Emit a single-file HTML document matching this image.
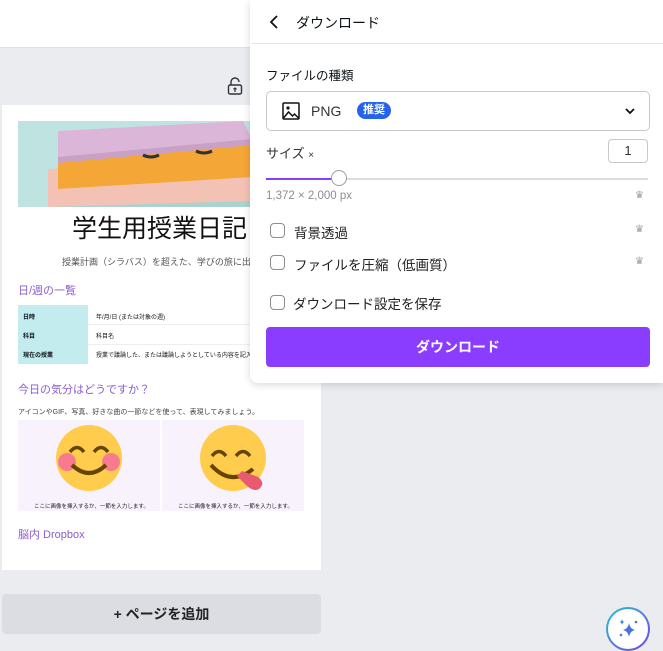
<!DOCTYPE html>
<html><head><meta charset="utf-8"><style>
*{box-sizing:border-box;margin:0;padding:0}
body{width:663px;height:650px;overflow:hidden;background:#ebecf0;font-family:"Liberation Sans","Noto Sans CJK JP",sans-serif;position:relative;color:#0e1318}
.abs{position:absolute}
.top{left:0;top:0;width:663px;height:48px;background:#fff;border-bottom:1px solid #e0e1e5}
.page{left:2px;top:105px;width:319px;height:465px;background:#fff}
.panel{left:250px;top:0;width:413px;height:383px;background:#fff;border-radius:0 0 0 8px;box-shadow:0 2px 8px rgba(0,0,0,.15)}
.cb{width:15px;height:15px;border:1.5px solid #8a8d93;border-radius:4px}
.crown{color:#9a9ca0;font-size:10px}
</style></head><body>
<div class="abs top"></div>
<svg class="abs" style="left:227px;top:76px" width="16" height="20" viewBox="0 0 16 20"><path d="M4 9V6a4 4 0 0 1 8 0" fill="none" stroke="#333" stroke-width="1.4"/><rect x="1.5" y="9" width="13" height="9" rx="1.5" fill="none" stroke="#333" stroke-width="1.4"/><path d="M8 16v-4M6.5 13.3L8 12l1.5 1.3" stroke="#333" stroke-width="1.2" fill="none"/></svg>
<div class="abs page">
  <svg class="abs" style="left:16px;top:16px" width="234" height="86" viewBox="0 0 234 86">
    <rect width="234" height="86" fill="#bfe3e0"/>
    <rect x="30" y="60" width="210" height="30" fill="#a9d3d0"/>
    <polygon points="30,48 234,38 234,80 30,86" fill="#f4c2b4"/>
    <polygon points="40,36 234,18 234,56 40,68" fill="#f4a637"/>
    <polygon points="40,10 225,0 234,18 40,36" fill="#dcb6d8"/>
    <polygon points="40,36 234,18 234,24 40,42" fill="#c8a0c8"/>
    <path d="M125 34q8 4 16 0M178 30q8 4 16 0" stroke="#333" stroke-width="3" fill="none"/>
  </svg>
  <div class="abs" style="left:70px;top:104px;font-size:25px;white-space:nowrap;color:#111">学生用授業日記</div>
  <div class="abs" style="left:60px;top:150px;font-size:9px;color:#555;white-space:nowrap">授業計画（シラバス）を超えた、学びの旅に出よ</div>
  <div class="abs" style="left:16px;top:177px;font-size:11px;color:#8b5ccf">日/週の一覧</div>
  <div class="abs" style="left:16px;top:200px;width:234px;height:59px;font-size:6px;font-weight:bold">
    <div class="abs" style="left:0;top:0;width:70px;height:59px;background:#c3ecee"></div>
    <div class="abs" style="left:5px;top:7px">日時</div><div class="abs" style="left:78px;top:7px;font-weight:normal">年/月/日 (または対象の週)</div>
    <div class="abs" style="left:5px;top:26px">科目</div><div class="abs" style="left:78px;top:26px;font-weight:normal">科目名</div>
    <div class="abs" style="left:5px;top:45px">現在の授業</div><div class="abs" style="left:78px;top:45px;font-weight:normal;white-space:nowrap">授業で議論した、または議論しようとしている内容を記入す</div>
    <div class="abs" style="left:70px;top:19px;width:164px;border-top:1px solid #eee"></div>
    <div class="abs" style="left:70px;top:39px;width:164px;border-top:1px solid #eee"></div>
  </div>
  <div class="abs" style="left:16px;top:276px;font-size:11px;color:#8b5ccf">今日の気分はどうですか？</div>
  <div class="abs" style="left:16px;top:302px;font-size:7px;color:#444;white-space:nowrap">アイコンやGIF、写真、好きな曲の一節などを使って、表現してみましょう。</div>
  <div class="abs" style="left:16px;top:315px;width:142px;height:91px;background:#f8f2fd"></div>
  <div class="abs" style="left:160px;top:315px;width:142px;height:91px;background:#f8f2fd"></div>
  <svg class="abs" style="left:52px;top:318px" width="70" height="70" viewBox="0 0 70 70"><circle cx="35" cy="35" r="33" fill="#ffcc4d"/><circle cx="13" cy="39" r="9" fill="#f77b8f"/><circle cx="57" cy="39" r="9" fill="#f77b8f"/><path d="M16 29q7-9 14 0M40 29q7-9 14 0" stroke="#664500" stroke-width="3.5" fill="none"/><path d="M18 42q17 16 34 0" stroke="#664500" stroke-width="4" fill="none"/></svg>
  <svg class="abs" style="left:196px;top:318px" width="72" height="70" viewBox="0 0 72 70"><circle cx="35" cy="35" r="33" fill="#ffcc4d"/><path d="M14 33q7-9 14 0M38 33q7-9 14 0" stroke="#664500" stroke-width="3.5" fill="none"/><path d="M13 42q20 22 42 4" stroke="#664500" stroke-width="4" fill="none"/><path d="M44 48l16 6q8 6 1 12q-5 3-12-3l-10-10z" fill="#e75a70"/></svg>
  <div class="abs" style="left:32px;top:397px;font-size:5.5px;color:#222">ここに画像を挿入するか、一節を入力します。</div>
  <div class="abs" style="left:176px;top:397px;font-size:5.5px;color:#222">ここに画像を挿入するか、一節を入力します。</div>
  <div class="abs" style="left:16px;top:421px;font-size:11px;color:#8b5ccf">脳内 Dropbox</div>
</div>
<div class="abs" style="left:2px;top:594px;width:319px;height:40px;background:#dcdde2;border-radius:4px;text-align:center;line-height:40px;font-size:14px;font-weight:bold;color:#222">+ ページを追加</div>
<div class="abs" style="left:606px;top:607px;width:44px;height:44px;border-radius:50%;background:linear-gradient(135deg,#27c4d6,#7b3fe0);padding:2px"><div style="width:100%;height:100%;border-radius:50%;background:#fff;position:relative">
<svg style="position:absolute;left:9px;top:9px" width="22" height="22" viewBox="0 0 22 22"><path d="M12 5q1 6 6 7q-5 1-6 7q-1-6-6-7q5-1 6-7z" fill="#4b6fe0"/><path d="M5 1q.4 2.5 2.5 3q-2.1.5-2.5 3q-.4-2.5-2.5-3q2.1-.5 2.5-3z" fill="#3f8ee0"/><circle cx="19" cy="4" r="1.3" fill="#5a6ee0"/><circle cx="4" cy="17" r="1.3" fill="#5a6ee0"/></svg></div></div>

<div class="abs panel">
  <svg class="abs" style="left:18px;top:14px" width="12" height="16" viewBox="0 0 12 16"><path d="M9 2L3 8l6 6" stroke="#111" stroke-width="1.8" fill="none"/></svg>
  <div class="abs" style="left:46px;top:13px;font-size:14px">ダウンロード</div>
  <div class="abs" style="left:2px;top:43px;width:411px;border-top:1px solid #e3e4e8"></div>
  <div class="abs" style="left:16px;top:65px;font-size:12.5px">ファイルの種類</div>
  <div class="abs" style="left:16px;top:91px;width:384px;height:40px;border:1px solid #c6c8cd;border-radius:5px"></div>
  <svg class="abs" style="left:32px;top:102px" width="18" height="18" viewBox="0 0 18 18"><rect x="1" y="1" width="16" height="16" rx="1" fill="none" stroke="#111" stroke-width="1.5"/><circle cx="6" cy="6" r="1.6" fill="#111"/><path d="M1.5 16l5-6 4 4 2-2 4 4" stroke="#111" stroke-width="1.5" fill="none"/></svg>
  <div class="abs" style="left:61px;top:103px;font-size:14px;color:#333">PNG</div>
  <div class="abs" style="left:107px;top:102px;width:34px;height:17px;border-radius:9px;background:#2563eb;color:#fff;font-size:11px;font-weight:bold;text-align:center;line-height:17px">推奨</div>
  <svg class="abs" style="left:374px;top:106px" width="12" height="10" viewBox="0 0 12 10"><path d="M2 3l4 4 4-4" stroke="#111" stroke-width="1.8" fill="none"/></svg>
  <div class="abs" style="left:16px;top:143px;font-size:13px;color:#333">サイズ <span style="font-size:10px">×</span></div>
  <div class="abs" style="left:358px;top:139px;width:40px;height:24px;border:1px solid #c6c8cd;border-radius:4px;text-align:center;line-height:22px;font-size:13px;color:#333">1</div>
  <div class="abs" style="left:16px;top:178px;width:382px;height:2px;background:#dcdde2"></div>
  <div class="abs" style="left:16px;top:178px;width:74px;height:2px;background:#8b3dff"></div>
  <div class="abs" style="left:81px;top:170px;width:16px;height:16px;border-radius:50%;background:#fff;border:1px solid #9a9ca0"></div>
  <div class="abs" style="left:16px;top:190px;font-size:11.5px;color:#8a8d93">1,372 × 2,000 px</div>
  <div class="abs crown" style="left:385px;top:190px">♛</div>
  <div class="abs cb" style="left:20px;top:223px"></div>
  <div class="abs" style="left:44px;top:222px;font-size:13.5px;color:#222">背景透過</div>
  <div class="abs crown" style="left:385px;top:224px">♛</div>
  <div class="abs cb" style="left:20px;top:255px"></div>
  <div class="abs" style="left:44px;top:254px;font-size:13.5px;color:#222">ファイルを圧縮（低画質）</div>
  <div class="abs crown" style="left:385px;top:256px">♛</div>
  <div class="abs cb" style="left:20px;top:295px"></div>
  <div class="abs" style="left:43px;top:293px;font-size:13.5px;color:#222">ダウンロード設定を保存</div>
  <div class="abs" style="left:16px;top:327px;width:384px;height:40px;border-radius:4px;background:#8b3dff;color:#fff;font-weight:bold;font-size:14px;text-align:center;line-height:40px">ダウンロード</div>
</div>
</body></html>
